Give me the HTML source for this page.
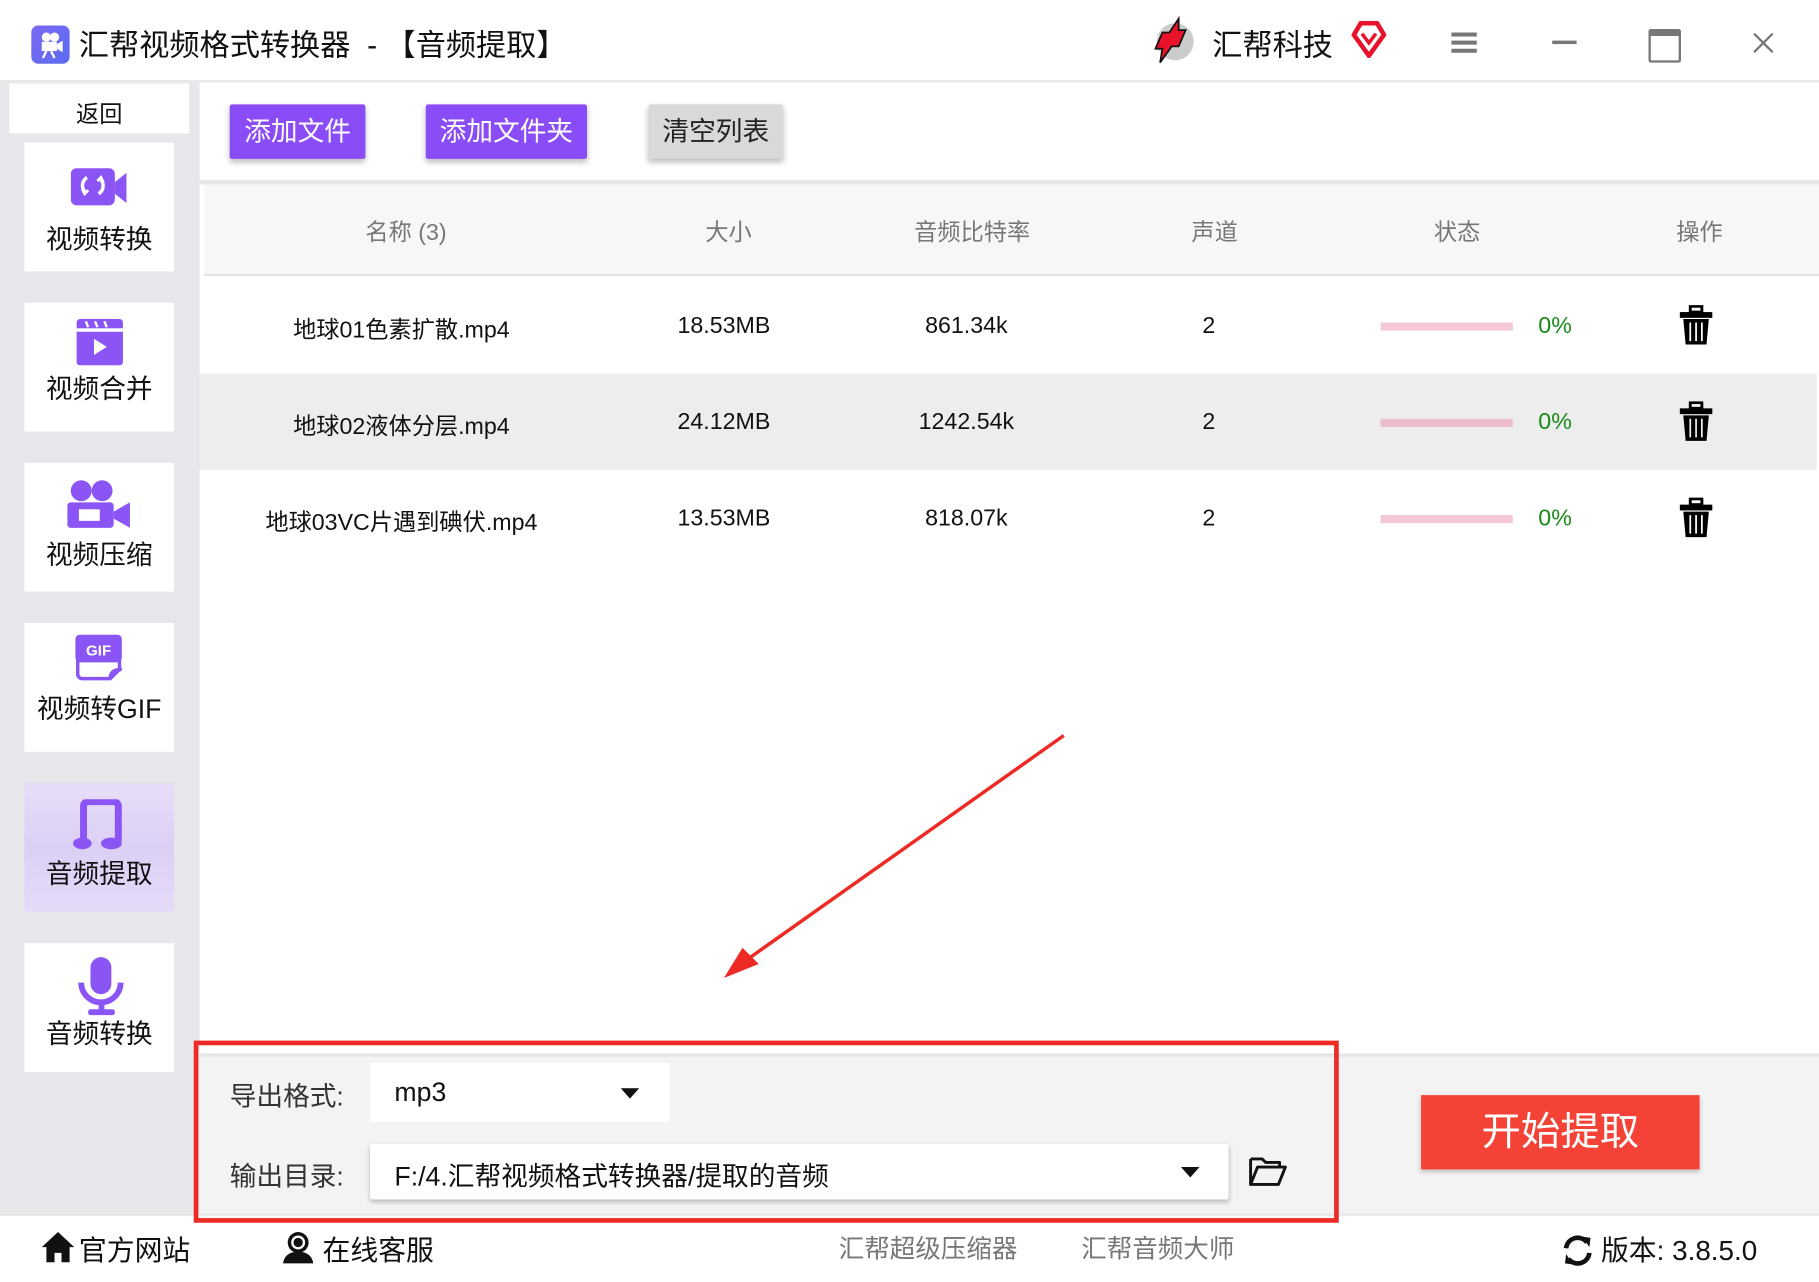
<!DOCTYPE html>
<html><head><meta charset="utf-8"><style>
html,body{margin:0;padding:0;width:1819px;height:1279px;overflow:hidden;background:#fff}
#w{position:absolute;left:0;top:0;width:1568px;height:1103px;transform:scale(1.1601);transform-origin:0 0;font-family:"Liberation Sans","Noto Sans CJK SC",sans-serif;color:#111}
.a{position:absolute}
.t{position:absolute;white-space:nowrap}
.side{background:#fff;left:21px;width:129px;height:111px}
.side .t{width:129px;text-align:center;font-size:23px;left:0}
.side svg{position:absolute;left:40px}
.btn{position:absolute;top:90px;height:47px;background:#8a4cf7;color:#fff;font-size:23px;text-align:center;line-height:47px;border-radius:2px;box-shadow:0 3px 5px rgba(0,0,0,.25)}
.h{top:184px;font-size:20px;color:#777;transform:translateX(-50%)}
.c{font-size:20px;transform:translateX(-50%)}
.bar{position:absolute;left:1190px;width:114px;height:7px;background:#f5c8d6}
.pct{position:absolute;left:1326px;font-size:20px;color:#1a8a1a}
</style></head><body><div id="w">
<!-- title bar -->
<div class="a" style="left:0;top:0;width:1568px;height:69px;background:#fff;border-bottom:2px solid #e8e8e8"></div>
<div class="a" style="left:27px;top:22px;width:33px;height:33px;border-radius:6px;background:linear-gradient(135deg,#7a6af5,#5b6cf0)"></div>
<svg class="a" style="left:30px;top:25px" width="27" height="27" viewBox="0 0 27 27"><circle cx="10" cy="7" r="4" fill="#fff"/><circle cx="17" cy="7" r="4" fill="#fff"/><rect x="6" y="11" width="13" height="8" fill="#fff"/><path d="M19 13l5-3v10l-5-3z" fill="#fff"/><path d="M10 19l-3 6M14 19l3 6" stroke="#fff" stroke-width="2"/></svg>
<div class="t" style="left:68px;top:19px;font-size:26px">汇帮视频格式转换器 &nbsp;- 【音频提取】</div>
<svg class="a" style="left:992px;top:14px" width="40" height="42" viewBox="0 0 40 42"><ellipse cx="21" cy="22" rx="16" ry="16" fill="#ccc"/><path d="M24 2L16 14h-6l-6 14h6l-2 12 10-14h6l6-14h-6z" fill="#e8132a" stroke="#111" stroke-width="1.5"/></svg>
<div class="t" style="left:1045px;top:19px;font-size:26px">汇帮科技</div>
<svg class="a" style="left:1165px;top:18px" width="30" height="32" viewBox="0 0 30 32"><path d="M8 2h14l6 10-13 18L2 12z" fill="none" stroke="#e8132a" stroke-width="4"/><path d="M9 11l6 8 6-8" fill="none" stroke="#e8132a" stroke-width="3"/></svg>
<svg class="a" style="left:1251px;top:28px" width="24" height="18"><rect y="0" width="22" height="3.5" fill="#777"/><rect y="7" width="22" height="3.5" fill="#777"/><rect y="14" width="22" height="3.5" fill="#777"/></svg>
<div class="a" style="left:1338px;top:35px;width:21px;height:3px;background:#777"></div>
<div class="a" style="left:1421px;top:25px;width:24px;height:21px;border:2px solid #777;border-top-width:6px;border-radius:2px"></div>
<svg class="a" style="left:1511px;top:28px" width="18" height="18"><path d="M1 1l16 16M17 1L1 17" stroke="#777" stroke-width="2"/></svg>
<!-- sidebar -->
<div class="a" style="left:0;top:71px;width:172px;height:975px;background:#e6e7eb"></div>
<div class="a" style="left:8px;top:72px;width:155px;height:43px;background:#fff"></div>
<div class="t" style="left:8px;top:82px;width:155px;text-align:center;font-size:20px">返回</div>
<div class="a side" style="top:123px"><svg style="top:20px" width="50" height="36" viewBox="0 0 50 36"><rect x="0" y="2" width="38" height="32" rx="5" fill="#8b55f5"/><path d="M38 14l10-8v26l-10-8z" fill="#8b55f5"/><path d="M14 10a8 8 0 0 0-2 12M24 24a8 8 0 0 0 2-12" stroke="#fff" stroke-width="3" fill="none"/><path d="M10 20l2 4 3-3M28 14l-2-4-3 3" stroke="#fff" stroke-width="2.5" fill="none"/></svg><div class="t" style="top:64px">视频转换</div></div>
<div class="a side" style="top:261px"><svg style="left:45px;top:14px" width="40" height="40" viewBox="0 0 40 40"><rect x="0" y="0" width="40" height="40" rx="3" fill="#8b55f5"/><rect x="0" y="8" width="40" height="3" fill="#fff"/><path d="M8 2l2 5M16 2l2 5M24 2l2 5" stroke="#fff" stroke-width="2"/><path d="M15 17l11 7-11 7z" fill="#fff"/></svg><div class="t" style="top:55px">视频合并</div></div>
<div class="a side" style="top:399px"><svg style="left:37px;top:14px" width="56" height="44" viewBox="0 0 56 44"><circle cx="12" cy="10" r="9" fill="#8b55f5"/><circle cx="30" cy="10" r="9" fill="#8b55f5"/><rect x="0" y="20" width="40" height="22" rx="3" fill="#8b55f5"/><rect x="10" y="26" width="18" height="10" fill="#fff"/><path d="M40 28l14-8v22l-14-8z" fill="#8b55f5"/></svg><div class="t" style="top:60px">视频压缩</div></div>
<div class="a side" style="top:537px"><svg style="left:42px;top:10px" width="46" height="44" viewBox="0 0 46 44"><rect x="2" y="0" width="40" height="24" rx="4" fill="#8b55f5"/><path d="M4 22v12a4 4 0 0 0 4 4h24l8-8V22" fill="none" stroke="#8b55f5" stroke-width="3"/><path d="M32 38c0-6 4-8 10-8" fill="none" stroke="#8b55f5" stroke-width="3"/><text x="22" y="18" font-size="13" font-weight="bold" fill="#fff" text-anchor="middle" font-family="Liberation Sans">GIF</text></svg><div class="t" style="top:55px">视频转GIF</div></div>
<div class="a side" style="top:675px;background:linear-gradient(#e8def8,#dccff5 50%,#e5dbf8)"><svg style="left:41px;top:14px" width="50" height="46" viewBox="0 0 50 46"><path d="M10 36V6a4 4 0 0 1 4-4h22a4 4 0 0 1 4 4v30" fill="none" stroke="#8b55f5" stroke-width="6"/><rect x="14" y="6" width="22" height="5" fill="#e4d9f7"/><ellipse cx="9" cy="38" rx="8" ry="5" fill="#8b55f5"/><ellipse cx="34" cy="38" rx="9" ry="5" fill="#8b55f5"/></svg><div class="t" style="top:59px">音频提取</div></div>
<div class="a side" style="top:813px"><svg style="left:46px;top:10px" width="40" height="54" viewBox="0 0 40 54"><rect x="11" y="2" width="18" height="32" rx="9" fill="#8b55f5"/><path d="M3 24a17 17 0 0 0 34 0" fill="none" stroke="#8b55f5" stroke-width="5"/><rect x="18" y="40" width="5" height="8" fill="#8b55f5"/><rect x="9" y="47" width="23" height="5" rx="2" fill="#8b55f5"/></svg><div class="t" style="top:59px">音频转换</div></div>
<!-- toolbar -->
<div class="btn" style="left:198px;width:117px">添加文件</div>
<div class="btn" style="left:367px;width:139px">添加文件夹</div>
<div class="btn" style="left:559px;width:116px;background:#d9d9d9;color:#222">清空列表</div>
<div class="a" style="left:172px;top:155px;width:1396px;height:4px;background:#e6e6e6"></div>
<div class="a" style="left:176px;top:159px;width:1392px;height:77px;background:#f7f7f7;border-bottom:2px solid #e3e3e3"></div>
<div class="t h" style="left:350px">名称 (3)</div>
<div class="t h" style="left:628px">大小</div>
<div class="t h" style="left:838px">音频比特率</div>
<div class="t h" style="left:1047px">声道</div>
<div class="t h" style="left:1256px">状态</div>
<div class="t h" style="left:1465px">操作</div>
<!-- rows -->
<div class="a" style="left:172px;top:322px;width:1394px;height:83px;background:#ededed"></div>
<div class="t c" style="left:346px;top:268px">地球01色素扩散.mp4</div>
<div class="t c" style="left:624px;top:270px">18.53MB</div>
<div class="t c" style="left:833px;top:270px">861.34k</div>
<div class="t c" style="left:1042px;top:270px">2</div>
<div class="bar" style="top:278px"></div><div class="pct" style="top:270px">0%</div>
<div class="t c" style="left:346px;top:351px">地球02液体分层.mp4</div>
<div class="t c" style="left:624px;top:353px">24.12MB</div>
<div class="t c" style="left:833px;top:353px">1242.54k</div>
<div class="t c" style="left:1042px;top:353px">2</div>
<div class="bar" style="top:361px;background:#ebbccb"></div><div class="pct" style="top:353px">0%</div>
<div class="t c" style="left:346px;top:434px">地球03VC片遇到碘伏.mp4</div>
<div class="t c" style="left:624px;top:436px">13.53MB</div>
<div class="t c" style="left:833px;top:436px">818.07k</div>
<div class="t c" style="left:1042px;top:436px">2</div>
<div class="bar" style="top:444px"></div><div class="pct" style="top:436px">0%</div>
<svg class="a" style="left:1447px;top:263px" width="30" height="36" viewBox="0 0 30 36"><rect x="10" y="1" width="10" height="5" fill="none" stroke="#000" stroke-width="2.5"/><rect x="1" y="6" width="28" height="5" fill="#000"/><path d="M4 12h22l-2 22H6z" fill="#000"/><path d="M10 15v16M15 15v16M20 15v16" stroke="#fff" stroke-width="1.5"/></svg>
<svg class="a" style="left:1447px;top:346px" width="30" height="36" viewBox="0 0 30 36"><rect x="10" y="1" width="10" height="5" fill="none" stroke="#000" stroke-width="2.5"/><rect x="1" y="6" width="28" height="5" fill="#000"/><path d="M4 12h22l-2 22H6z" fill="#000"/><path d="M10 15v16M15 15v16M20 15v16" stroke="#ededed" stroke-width="1.5"/></svg>
<svg class="a" style="left:1447px;top:429px" width="30" height="36" viewBox="0 0 30 36"><rect x="10" y="1" width="10" height="5" fill="none" stroke="#000" stroke-width="2.5"/><rect x="1" y="6" width="28" height="5" fill="#000"/><path d="M4 12h22l-2 22H6z" fill="#000"/><path d="M10 15v16M15 15v16M20 15v16" stroke="#fff" stroke-width="1.5"/></svg>
<!-- arrow -->
<svg class="a" style="left:0;top:0" width="1568" height="1103"><path d="M917 634L640 830" stroke="#ee2a24" stroke-width="3"/><path d="M624 843l30-12-14-14z" fill="#ee2a24"/></svg>
<!-- bottom panel -->
<div class="a" style="left:172px;top:908px;width:1396px;height:138px;background:#f3f3f3;border-top:3px solid #e6e6e6"></div>
<div class="t" style="left:198px;top:926px;font-size:23px;color:#333">导出格式:</div>
<div class="a" style="left:319px;top:916px;width:258px;height:51px;background:#fff"></div>
<div class="t" style="left:340px;top:928px;font-size:23px">mp3</div>
<svg class="a" style="left:535px;top:938px" width="16" height="10"><path d="M0 0h16L8 9z" fill="#111"/></svg>
<div class="t" style="left:198px;top:995px;font-size:23px;color:#333">输出目录:</div>
<div class="a" style="left:319px;top:986px;width:740px;height:48px;background:#fff;box-shadow:0 2px 4px rgba(0,0,0,.25);border-radius:2px"></div>
<div class="t" style="left:340px;top:995px;font-size:23px">F:/4.汇帮视频格式转换器/提取的音频</div>
<svg class="a" style="left:1018px;top:1006px" width="16" height="10"><path d="M0 0h16L8 9z" fill="#111"/></svg>
<svg class="a" style="left:1076px;top:996px" width="34" height="28" viewBox="0 0 34 28"><path d="M2 3h10l3 3h12v4M2 3v22h24l6-15H8L2 25" fill="none" stroke="#111" stroke-width="2.5" stroke-linejoin="round"/></svg>
<div class="a" style="left:1225px;top:944px;width:240px;height:64px;background:#f44336;color:#fff;font-size:34px;text-align:center;line-height:64px;box-shadow:0 2px 4px rgba(0,0,0,.25)">开始提取</div>
<!-- footer -->
<div class="a" style="left:0;top:1046px;width:1568px;height:57px;background:#fff;border-top:2px solid #e6e6e6"></div>
<svg class="a" style="left:35px;top:1061px" width="30" height="28" viewBox="0 0 30 28"><path d="M15 1L1 14h4v13h7v-8h6v8h7V14h4z" fill="#111"/></svg>
<div class="t" style="left:68px;top:1058px;font-size:24px">官方网站</div>
<svg class="a" style="left:242px;top:1060px" width="30" height="30" viewBox="0 0 30 30"><circle cx="15" cy="11" r="9" fill="#111"/><circle cx="15" cy="11" r="6" fill="#fff"/><circle cx="15" cy="11" r="4" fill="#111"/><path d="M2 29c1-7 6-10 13-10s12 3 13 10z" fill="#111"/></svg>
<div class="t" style="left:278px;top:1058px;font-size:24px">在线客服</div>
<div class="t" style="left:723px;top:1059px;font-size:22px;color:#777">汇帮超级压缩器</div>
<div class="t" style="left:932px;top:1059px;font-size:22px;color:#777">汇帮音频大师</div>
<svg class="a" style="left:1346px;top:1063px" width="28" height="30" viewBox="0 0 28 30"><path d="M4 13a10 10 0 0 1 18-5M24 17a10 10 0 0 1-18 5" fill="none" stroke="#111" stroke-width="4"/><path d="M18 3l7 1-1 8zM10 27l-7-1 1-8z" fill="#111"/></svg>
<div class="t" style="left:1380px;top:1058px;font-size:24px">版本: 3.8.5.0</div>
<!-- red highlight box on top -->
<div class="a" style="left:167px;top:897px;width:979px;height:149px;border:4px solid #ee2a24"></div>
</div></body></html>
